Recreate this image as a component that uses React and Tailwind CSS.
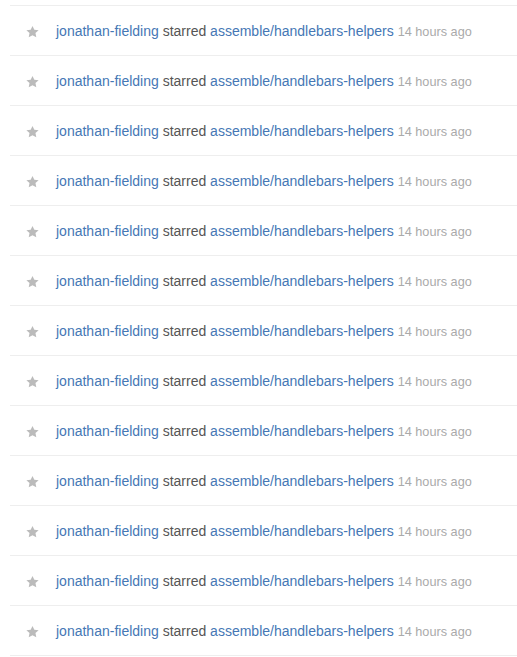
import React from "react";

const rows = Array.from({ length: 13 }, (_, i) => ({
  id: i,
  actor: "jonathan-fielding",
  repo: "assemble/handlebars-helpers",
  time: "14 hours ago",
}));

const Star = () => (
  <svg viewBox="0 0 14 16" className="w-[13px] h-[14px] fill-[#bbbbbb]">
    <path d="M14 6l-4.9-.64L7 1 4.9 5.36 0 6l3.6 3.26L2.67 14 7 11.67 11.33 14l-.93-4.74L14 6z" />
  </svg>
);

const App = () => {
  return (
    <div className="bg-white min-h-[657px] pt-[5px] pl-[10px] font-['Helvetica_Neue','Liberation_Sans',Arial,sans-serif]">
      {rows.map((row, i) => (
        <div
          key={row.id}
          className={`h-[50px] border-t border-[#eeeeee] flex items-center pt-[3px] ${
            i === rows.length - 1 ? "border-b h-[51px]" : ""
          }`}>
          <div className="w-[46px] pl-[16px] flex items-center">
            <Star />
          </div>
          <div className="text-[14px] text-[#555555] whitespace-nowrap">
            <a className="text-[#4577b5]">{row.actor}</a> starred{" "}
            <a className="text-[#4577b5]">{row.repo}</a>{" "}
            <span className="text-[12.7px] text-[#aaaaaa]">{row.time}</span>
          </div>
        </div>
      ))}
    </div>
  );
};

export default App;
